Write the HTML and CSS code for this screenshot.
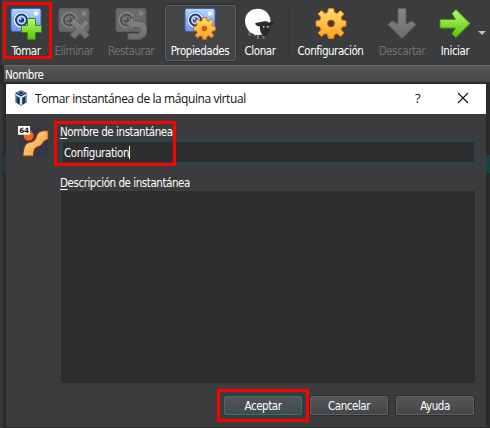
FILE: index.html
```html
<!DOCTYPE html>
<html lang="es">
<head>
<meta charset="utf-8">
<title>Tomar instantánea</title>
<link rel="stylesheet" href="styles.css">
</head>
<body>
<svg class="defs" width="0" height="0">
  <defs>
    <linearGradient id="blue" x1="0" y1="0" x2="0" y2="1"><stop offset="0" stop-color="#b4dcff"/><stop offset="1" stop-color="#7093f0"/></linearGradient>
    <linearGradient id="green" x1="0" y1="0" x2="0" y2="1"><stop offset="0" stop-color="#bdf575"/><stop offset="1" stop-color="#55c900"/></linearGradient>
    <linearGradient id="gold" x1="0" y1="0" x2="0" y2="1"><stop offset="0" stop-color="#ffdc70"/><stop offset="1" stop-color="#ffa020"/></linearGradient>
    <linearGradient id="grey" x1="0" y1="0" x2="0" y2="1"><stop offset="0" stop-color="#858687"/><stop offset="1" stop-color="#6c6d6e"/></linearGradient>
    <g id="camera">
      <rect x="1" y=".5" width="30" height="23" rx="2" fill="url(#blue)" stroke="#3c60bd"/>
      <circle cx="11.500" cy="12" r="8.300" fill="#eff6ff" stroke="#7ba0df"/>
      <circle cx="11.500" cy="12" r="5.500" fill="#bcd7ff" stroke="#18377d" stroke-width="2"/>
      <circle cx="11.500" cy="12" r="2.600" fill="#18377d"/><circle cx="10.500" cy="11" r="1" fill="#fff"/>
      <circle cx="26" cy="5.500" r="2.300" fill="#f2f8ff"/>
    </g>
    <g id="camera-off">
      <rect x="1" y=".5" width="30" height="23" rx="2" fill="#696a6b" stroke="#5d5e5f"/>
      <circle cx="11.500" cy="12" r="8.300" fill="#828384"/>
      <circle cx="11.500" cy="12" r="5.500" fill="#737475" stroke="#4e4f50" stroke-width="2"/>
      <circle cx="11.500" cy="12" r="2.600" fill="#4e4f50"/><circle cx="10.500" cy="11" r="1" fill="#999"/>
      <circle cx="26" cy="5.500" r="2.300" fill="#828384"/>
    </g>
    <path id="gear" fill-rule="evenodd" stroke-linejoin="round" d="M-2.500-15H2.500L3.500-11L6-10L9.500-13L13-9.500L10-6L11-3.500L15-2.500V2.500L11 3.500L10 6L13 9.500L9.500 13L6 10L3.500 11L2.500 15H-2.500L-3.500 11L-6 10L-9.500 13L-13 9.500L-10 6L-11 3.500L-15 2.500V-2.500L-11-3.500L-10-6L-13-9.500L-9.500-13L-6-10L-3.500-11ZM0-3.200A3.200 3.200 0 1 0 0 3.200A3.200 3.200 0 1 0 0-3.200Z"/>
  </defs>
</svg>
<main class="screen">
  <nav class="toolbar">
    <div class="tool marked">
      <svg class="icon" viewBox="0 0 32 32"><use href="#camera"/><path d="M17.500 10.500h8v7h6v7h-6v7h-8v-7h-6v-7h6z" fill="url(#green)" stroke="#398319"/></svg>
      <span class="label">Tomar</span>
    </div>
    <div class="tool off">
      <svg class="icon" viewBox="0 0 32 32"><use href="#camera-off"/><path d="M12 15l4.500-4.500 6 6 5-5 3.500 3.500-4.500 6 5 6-4.500 4-5-5.500-5.500 5.500-4.500-4.500 6-5.500z" fill="url(#grey)" stroke="#5b5c5d"/></svg>
      <span class="label">Eliminar</span>
    </div>
    <div class="tool off">
      <svg class="icon" viewBox="0 0 32 32"><use href="#camera-off"/><path d="M11 15.500l7.500-7v4.500h4.500c6 0 9 4 9 9 0 6-4 9.500-9.500 9.500H13v-6h8.500c3 0 4-1 4-3s-1.500-3-3.500-3h-3.500v4z" fill="url(#grey)" stroke="#5b5c5d"/></svg>
      <span class="label">Restaurar</span>
    </div>
    <div class="tool pressed">
      <svg class="icon" viewBox="0 0 32 32"><use href="#camera"/><use href="#gear" transform="translate(20.500 20.500) scale(.73)" fill="url(#gold)" stroke="#c56b18" stroke-width="1.300"/><circle cx="20.500" cy="20.500" r="2.700" fill="#d45c12"/></svg>
      <span class="label">Propiedades</span>
    </div>
    <div class="tool">
      <svg class="icon" viewBox="0 0 32 32"><path d="M5.500 23v5M14 26v5M19.500 25v6M11 25v3" stroke="#717171" stroke-width="2"/><path d="M14 .7c7 0 12 5 12.500 12 0 8-5 14.300-12.500 14.300S1 20 1 13C1 5 7 .7 14 .7z" fill="#fff"/><path d="M11 15.500c2-1.500 4-1 6-1.500 3-1 6-1 8 .5 2-1 4-1 5 .5-1 2-2.500 2-4 2l-.5 6-3 5h-3l-3-4-1-6c-2 .5-3 0-4.500-2.500z" fill="#292a2b"/><path d="M19 18h1.500v1.500H19zM23 18h1.500v1.500H23z" fill="#ddd"/></svg>
      <span class="label">Clonar</span>
    </div>
    <i class="divider"></i>
    <div class="tool">
      <svg class="icon" viewBox="0 0 32 32"><use href="#gear" transform="translate(16 15.500)" fill="url(#gold)" stroke="#e47a18"/><circle cx="16" cy="15.500" r="3.400" fill="#3b3c3d" stroke="#b65b10"/></svg>
      <span class="label">Configuración</span>
    </div>
    <div class="tool off">
      <svg class="icon" viewBox="0 0 32 32"><path d="M12 .5h8v15.500l6-3 4 3.500L16 30.500 2 16.500l4-3.500 6 3z" fill="url(#grey)" stroke="#5c5d5e"/></svg>
      <span class="label">Descartar</span>
    </div>
    <div class="tool">
      <svg class="icon" viewBox="0 0 32 32"><path d="M1 11.500h15.500L13 5.500 17 1.500 31 15.500 17 29.500 13 26 16.500 20H1z" fill="url(#green)" stroke="#459511"/></svg>
      <span class="label">Iniciar</span>
    </div>
    <i class="more"></i>
  </nav>
  <header class="list-head">Nombre</header>
  <section class="workspace">
    <div class="dialog">
      <div class="titlebar">
        <svg class="cube" viewBox="0 0 14 16"><path d="M7 .3l6 2.700v9l-6 3.700L1 12V3z" fill="#17365b"/><path d="M1 3l6 3.500L13 3v2L7 8.500 1 5z" fill="#d9e9f0"/><path d="M5.800 8h2.400v6.500L7 15.300l-1.200-.8z" fill="#d9e9f0"/><path d="M2.500 2.500L7 .7l4.500 1.800L7 5z" fill="#6f93b3"/><path d="M4.500 2.800L7 1.800l2.500 1L7 4.200z" fill="#183453"/><path d="M1 3v9l1.500 1V4zM13 3v9l-1.500 1V4z" fill="#80a5bc"/></svg>
        <span class="title">Tomar instantánea de la máquina virtual</span>
        <span class="help">?</span>
        <svg class="close" viewBox="0 0 12 12"><path d="M1 1l10 10M11 1L1 11" stroke="#111" stroke-width="1.100"/></svg>
      </div>
      <div class="content">
        <svg class="os" viewBox="0 0 32 32">
          <defs><linearGradient id="os" x1="0" y1="0" x2="1" y2="1"><stop offset="0" stop-color="#ffe09a"/><stop offset="1" stop-color="#f6932c"/></linearGradient></defs>
          <rect x="1" y="1" width="30" height="30" fill="#343844"/>
          <circle cx="11" cy="10" r="5.500" fill="#ef691b" stroke="#792814"/>
          <path d="M31 5h-4c-5 0-7 3-8 6-1 4-3 5-7 6-5 1-6 5-7 14h11c0-8 2-9 6-10 4-2 4-7 9-7z" fill="url(#os)" stroke="#8d3d12"/>
          <rect x="0" y="0" width="12.500" height="9" fill="#fff"/><text x="1.200" y="7" class="bits">64</text>
        </svg>
        <div class="form">
          <label class="caption"><u>N</u>ombre de instantánea</label>
          <div class="field"><span class="value">Configuration</span><i class="caret"></i></div>
          <label class="caption second"><u>D</u>escripción de instantánea</label>
          <div class="description"></div>
          <div class="actions">
            <button class="accept">Aceptar</button>
            <button>Cancelar</button>
            <button>Ayuda</button>
          </div>
        </div>
      </div>
      <i class="name-mark"></i>
    </div>
  </section>
</main>
</body>
</html>
```
FILE: styles.css
```css
*, *::before, *::after { box-sizing: border-box; }
body { margin: 0; background: #292a2b; font: 11.5px/16px "DejaVu Sans Condensed", "DejaVu Sans", sans-serif; font-stretch: condensed; letter-spacing: -.45px; color: #fff; }
.defs { position: absolute; }
.screen { width: 490px; height: 428px; overflow: hidden; }
.toolbar { height: 65px; background: #3b3c3d; display: grid; grid-template-columns: 44px 52px 65px 71px 48px 8px 77px 66px 40px 13px; padding: 5px 0 4px 3px; border-left: 1px solid #292a2b; }
.tool { position: relative; display: flex; flex-direction: column; align-items: center; height: 56px; padding-top: 3px; white-space: nowrap; }
.tool:nth-child(3) { padding-right: 3px; }
.icon { width: 32px; height: 32px; display: block; flex: none; }
.label { margin-top: 3px; }
.off { color: #707172; }
.pressed { border: 1px solid #5b5c5d; background: #444546; padding: 2px 1px 0 0; border-radius: 2px; box-shadow: 0 0 0 1px #323334; }
.divider { width: 1px; height: 46px; background: #343536; margin: 5px 0 0 4px; }
.more { border: 4px solid transparent; border-top-color: #bfc0c1; border-bottom: 0; width: 8px; height: 4px; margin: 26px 0 0 3px; }
.marked::after { content: ""; position: absolute; left: -1px; top: -3px; width: 49px; height: 57px; border: 3px solid #f00; }
.list-head { height: 19px; margin-left: 4px; background: linear-gradient(#565758, #444546); border-top: 1px solid #686969; border-bottom: 2px solid #292a2b; padding: 1px 0 0 1px; line-height: 16px; }
.workspace { height: 344px; padding-left: 6px; background: linear-gradient(90deg, #353637 0 3px, #292a2b 3px 4px, transparent 4px), linear-gradient(#292a2b 0 71px, #164149 71px 89px, #292a2b 89px); }
.dialog { position: relative; width: 480px; height: 343px; background: #3b3c3d; }
.titlebar { height: 30px; background: #fff; color: #111; display: grid; grid-template-columns: 29px 375px 1fr 29px; align-items: center; }
.cube { width: 14px; height: 16px; margin-left: 8px; margin-top: -2px; }
.title { font: 12px/16px "Open Sans", sans-serif; letter-spacing: -.41px; }
.help { font: 13px/16px "Open Sans", sans-serif; padding-left: 5px; margin-top: -2px; }
.close { width: 12px; height: 12px; margin-top: -2px; }
.content { display: grid; grid-template-columns: 43px 414px; padding-left: 12px; }
.os { width: 31px; height: 31px; margin-top: 12px; }
.bits { font: bold 7.5px "DejaVu Sans", sans-serif; fill: #111; letter-spacing: -.3px; }
.caption { display: block; height: 16px; margin: 10px 0 0 -1px; }
.caption u { text-underline-offset: 2px; }
.second { margin-top: 12px; }
.field { display: flex; align-items: center; height: 22px; margin: 1px 0 0 1px; padding-left: 1px; background: #2d2e2f; border: 1px solid #17474f; border-radius: 2px; }
.value { padding-top: 1px; letter-spacing: -.38px; }
.caret { width: 1px; height: 13px; background: #fff; }
.description { height: 192px; background: #2d2e2f; }
.actions { display: flex; gap: 8px; margin: 13px 0 0 163px; }
button { position: relative; width: 78px; height: 19px; padding: 1px 0 0; border: 1px solid #5d6061; border-radius: 2px; background: linear-gradient(#555657, #454647); color: #fff; font: inherit; line-height: 16px; letter-spacing: -.45px; box-shadow: 0 0 0 1px #2d2e2f; }
.accept { border-color: #526668; background: linear-gradient(#505657, #424b4c); box-shadow: 0 0 0 2px #284145; }
.accept::after { content: ""; position: absolute; left: -8px; top: -8px; width: 92px; height: 33px; border: 3px solid #f00; }
.name-mark { position: absolute; left: 48px; top: 37px; width: 122px; height: 45px; border: 3px solid #f00; }
```
